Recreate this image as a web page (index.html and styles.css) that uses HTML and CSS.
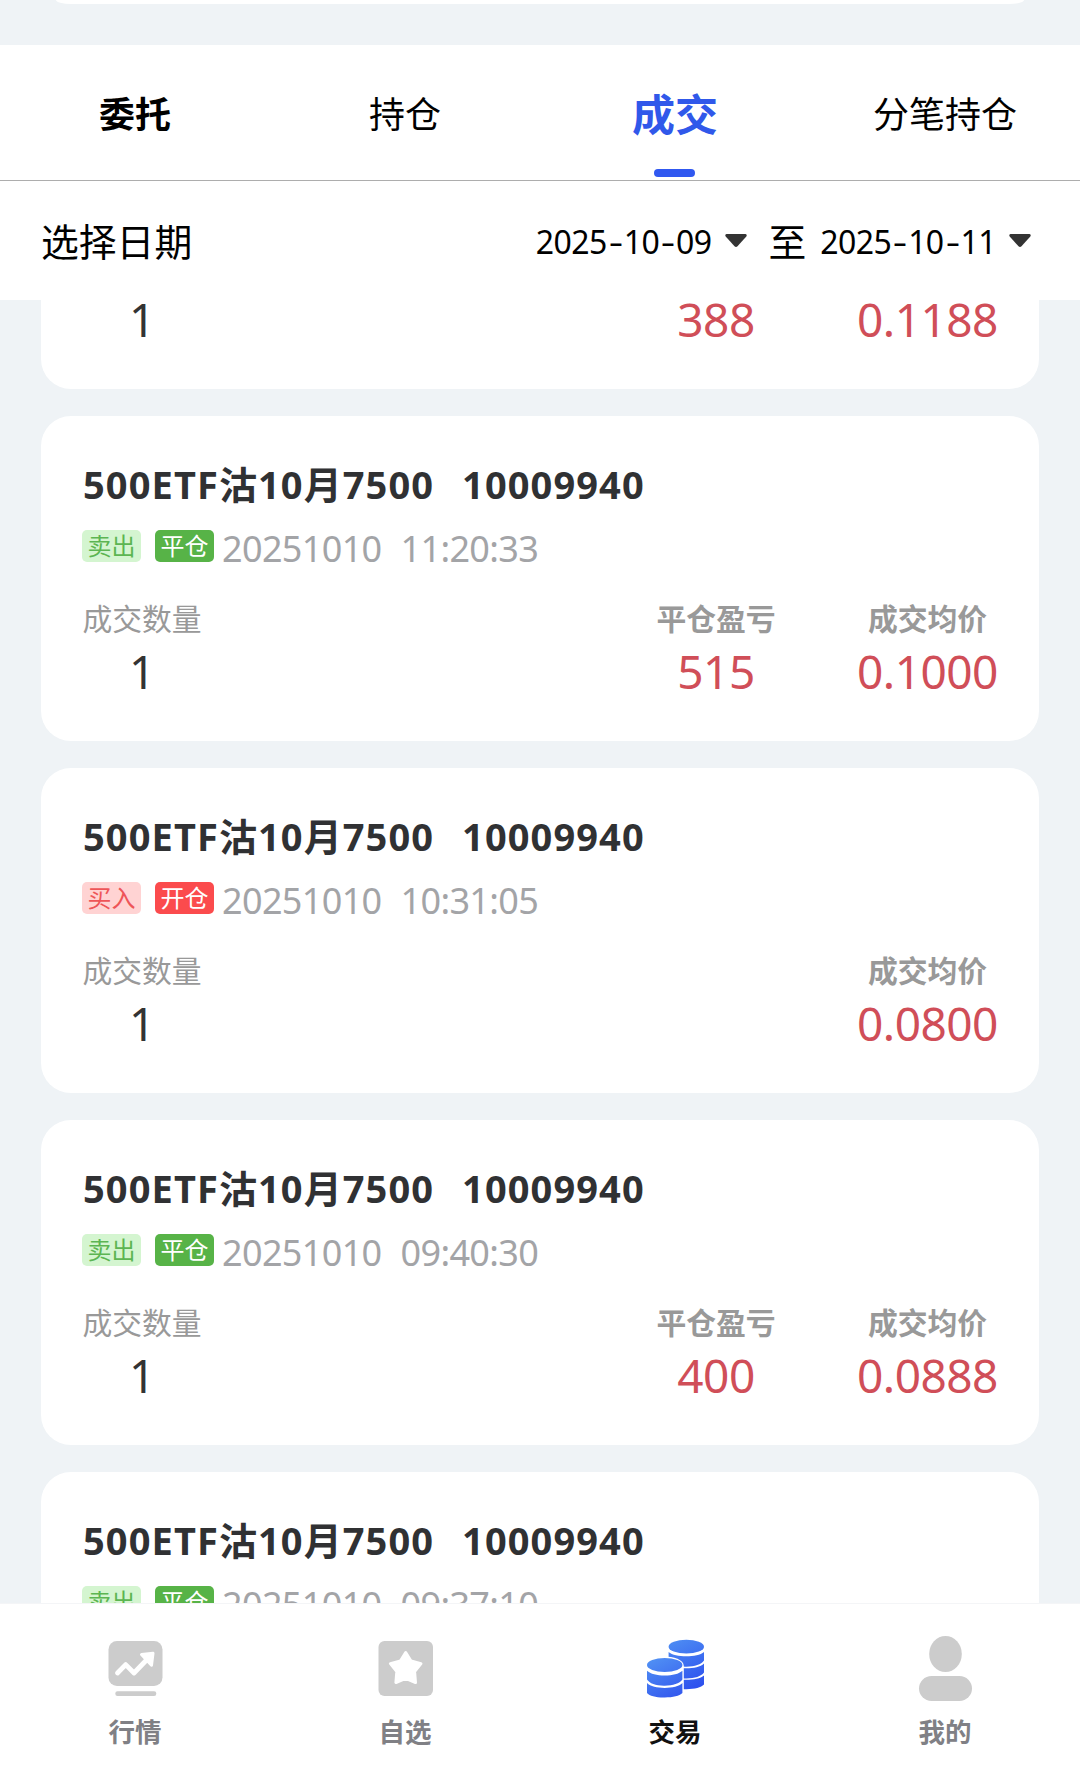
FILE: index.html
```
<!DOCTYPE html>
<html lang="zh-CN">
<head>
<meta charset="utf-8">
<title>成交</title>
<link rel="stylesheet" href="styles.css">
</head>
<body>
<div class="app">
  <div class="summary"></div>

  <nav class="tabs">
    <a class="tab tab-strong">委托</a>
    <a class="tab">持仓</a>
    <a class="tab tab-active">成交</a>
    <a class="tab">分笔持仓</a>
  </nav>

  <div class="filter">
    <span class="filter-label">选择日期</span>
    <div class="range">
      <span class="date">2025<i>-</i>10<i>-</i>09</span>
      <svg class="caret" viewBox="0 0 22 13"><path d="M1.5 0H20.500Q22.500 .8 21.300 2.500L12.500 12.200Q11 13.600 9.500 12.200L.7 2.500Q-.5 .8 1.500 0Z"/></svg>
      <span class="to">至</span>
      <span class="date">2025<i>-</i>10<i>-</i>11</span>
      <svg class="caret" viewBox="0 0 22 13"><path d="M1.5 0H20.500Q22.500 .8 21.300 2.500L12.500 12.200Q11 13.600 9.500 12.200L.7 2.500Q-.5 .8 1.500 0Z"/></svg>
    </div>
  </div>

  <main class="list">
    <article class="card card-tail">
      <div class="stats">
        <div class="stat qty"><b>1</b></div>
        <div class="stat pnl"><b>388</b></div>
        <div class="stat price"><b>0.1188</b></div>
      </div>
    </article>

    <article class="card">
      <h2 class="title"><span class="name">500ETF沽10月7500</span><span class="code">10009940</span></h2>
      <div class="meta"><span class="tag sell">卖出</span><span class="tag close">平仓</span><span class="day">20251010</span><span class="time">11:20:33</span></div>
      <div class="stats">
        <div class="stat qty"><span>成交数量</span><b>1</b></div>
        <div class="stat pnl"><span>平仓盈亏</span><b>515</b></div>
        <div class="stat price"><span>成交均价</span><b>0.1000</b></div>
      </div>
    </article>

    <article class="card">
      <h2 class="title"><span class="name">500ETF沽10月7500</span><span class="code">10009940</span></h2>
      <div class="meta"><span class="tag buy">买入</span><span class="tag open">开仓</span><span class="day">20251010</span><span class="time">10:31:05</span></div>
      <div class="stats">
        <div class="stat qty"><span>成交数量</span><b>1</b></div>
        <div class="stat price"><span>成交均价</span><b>0.0800</b></div>
      </div>
    </article>

    <article class="card">
      <h2 class="title"><span class="name">500ETF沽10月7500</span><span class="code">10009940</span></h2>
      <div class="meta"><span class="tag sell">卖出</span><span class="tag close">平仓</span><span class="day">20251010</span><span class="time">09:40:30</span></div>
      <div class="stats">
        <div class="stat qty"><span>成交数量</span><b>1</b></div>
        <div class="stat pnl"><span>平仓盈亏</span><b>400</b></div>
        <div class="stat price"><span>成交均价</span><b>0.0888</b></div>
      </div>
    </article>

    <article class="card">
      <h2 class="title"><span class="name">500ETF沽10月7500</span><span class="code">10009940</span></h2>
      <div class="meta"><span class="tag sell">卖出</span><span class="tag close">平仓</span><span class="day">20251010</span><span class="time">09:37:10</span></div>
    </article>
  </main>

  <footer class="nav">
    <a class="nav-item">
      <svg viewBox="0 0 60 66"><rect x="3.500" y="5" width="54" height="45" rx="8.500"/><rect x="10.300" y="55.300" width="41" height="4.700" rx="2.200"/><path class="line" d="M12.500 37L20.700 28.600L29 37L42 23.500"/><path class="cut" d="M36.500 18.500L48 17.300L46.500 29.300Z"/></svg>
      <span>行情</span>
    </a>
    <a class="nav-item">
      <svg viewBox="0 0 60 66"><rect x="3.500" y="5" width="54.500" height="55" rx="6"/><path class="cut" d="M30.700 16.500L36 25L46 27.600L39.600 35.500L40.500 46.500L30.700 42.300L20.900 46.500L21.800 35.500L15.400 27.600L25.400 25Z"/></svg>
      <span>自选</span>
    </a>
    <a class="nav-item nav-active">
      <svg viewBox="0 0 60 66">
        <defs>
          <linearGradient id="back" gradientUnits="userSpaceOnUse" x1="28" y1="4" x2="52" y2="52"><stop offset="0" stop-color="#4d8cf3"/><stop offset="1" stop-color="#2d50ee"/></linearGradient>
          <linearGradient id="front" gradientUnits="userSpaceOnUse" x1="8" y1="22" x2="28" y2="61"><stop offset="0" stop-color="#5090f4"/><stop offset="1" stop-color="#355bee"/></linearGradient>
        </defs>
        <g fill="url(#back)">
          <ellipse cx="41.300" cy="10.700" rx="17.700" ry="6.900"/>
          <path d="M23.600 16C27 19 34 20.300 41.300 20.300S55.600 19 59 16V24.500C56 28.500 50 30.500 41.300 30.700S26 28 23.600 24.500Z"/>
          <path d="M23.600 27.500C27 30.800 34 32.300 41.300 32.300S55.600 30.800 59 27.500V36.500C56 40.500 50 42.300 41.300 42.500S26 40 23.600 36.500Z"/>
          <path d="M23.600 39.500C27 42.600 34 43.800 41.300 43.800S55.600 42.600 59 39.500V48.500C56 51.500 50 53 41.300 53.200S26 52 23.600 48.500Z"/>
        </g>
        <path fill="#fff" d="M0 28.800C0 17.500 38.800 17.500 38.800 30V63H0Z"/>
        <g fill="url(#front)">
          <ellipse cx="19.700" cy="29" rx="17.700" ry="7"/>
          <path d="M2 34.800C5.400 38 12 39.500 19.700 39.500S34 38 37.400 34.800V43.500C34.500 47.500 28 49.500 19.700 49.700S4.500 47.500 2 43.500Z"/>
          <path d="M2 47C5.400 50.300 12 51.900 19.700 51.900S34 50.300 37.400 47V57C34.500 60 28 61.300 19.700 61.500S4.500 60 2 57Z"/>
        </g>
      </svg>
      <span>交易</span>
    </a>
    <a class="nav-item">
      <svg viewBox="0 0 60 66"><ellipse cx="30.500" cy="18" rx="16.300" ry="18"/><rect x="4" y="40" width="53" height="25" rx="12.500"/></svg>
      <span>我的</span>
    </a>
  </footer>
</div>
</body>
</html>
```
FILE: styles.css
```
* { box-sizing: border-box; }

body {
  margin: 0;
  background: #eff3f6;
  color: #000;
  font-family: "Noto Sans", "Noto Sans CJK SC", sans-serif;
}

.app {
  display: flex;
  flex-direction: column;
  height: 1765px;
  overflow: hidden;
}

.summary {
  flex: none;
  height: 4px;
  margin: 0 56px 41px;
  background: #fff;
  border-radius: 0 0 15px 15px / 0 0 4px 4px;
}

/* Section tabs */
.tabs {
  flex: none;
  display: grid;
  grid-template-columns: repeat(4, 1fr);
  height: 136px;
  background: #fff;
  border-bottom: 1px solid #adadad;
}

.tab {
  display: flex;
  align-items: center;
  justify-content: center;
  padding-bottom: 2px;
  font: 400 36px/52px "Noto Sans CJK SC", sans-serif;
}

.tab-strong { font-weight: 700; }

.tab-active {
  position: relative;
  color: #3058ea;
  font-size: 43px;
  font-weight: 700;
}

.tab-active::after {
  content: "";
  position: absolute;
  bottom: 3px;
  left: calc(50% - 21px);
  width: 41px;
  height: 8px;
  border-radius: 4px;
  background: #3058f0;
}

/* Date range */
.filter {
  flex: none;
  display: flex;
  align-items: center;
  justify-content: space-between;
  height: 119px;
  padding: 0 49px 0 41px;
  background: #fff;
}

.filter-label, .to {
  padding-bottom: 1px;
  font: 400 37.800px/54px "Noto Sans CJK SC", sans-serif;
}

.range { display: flex; align-items: center; }

.date {
  padding-top: 3px;
  font-size: 32px;
  line-height: 44px;
  letter-spacing: -0.600px;
  white-space: nowrap;
}

.date i {
  display: inline-block;
  width: 17px;
  font-style: normal;
  text-align: center;
  transform: scaleX(1.400);
}

.caret { width: 22px; height: 13px; margin-left: 13px; fill: #333; }
.to { margin: 0 14px 0 22px; }

/* Trades */
.list {
  flex: 1;
  min-height: 0;
  display: flex;
  flex-direction: column;
  gap: 27px;
  padding: 0 41px;
  overflow: hidden;
}

.card {
  flex: none;
  height: 325px;
  padding: 42px 41px 0;
  background: #fff;
  border-radius: 30px;
}

.card-tail {
  height: 89px;
  padding-top: 0;
  border-radius: 0 0 30px 30px;
}

.title {
  display: flex;
  gap: 28px;
  margin: 0;
  padding-left: 1px;
  color: #303133;
  font-size: 38px;
  font-weight: 700;
  line-height: 52px;
  letter-spacing: 1.100px;
  white-space: nowrap;
}

.meta {
  display: flex;
  align-items: center;
  height: 40px;
  margin-top: 18px;
  color: #a3a4a7;
  font-size: 36px;
  line-height: 40px;
  letter-spacing: -0.650px;
}

.day, .time { padding-top: 1px; }

.tag {
  width: 59px;
  height: 32px;
  margin: -4px 14px 0 0;
  border-radius: 5px;
  font: 400 24px/30px "Noto Sans CJK SC", sans-serif;
  letter-spacing: 0;
  text-align: center;
}

.tag + .tag { margin-right: 8px; }

.sell { background: #d4f5d0; color: #5cb552; }
.close { background: #57b347; color: #fff; }
.buy { background: #ffd3d3; color: #ee5558; }
.open { background: #fb4b4d; color: #fff; }

.time { margin-left: 19px; }

.stats {
  display: flex;
  gap: 81px;
  margin-top: 29px;
}

.card-tail .stats { margin-top: -1px; }

.stat { width: 120px; text-align: center; }
.qty { margin-right: auto; }
.price { width: 141px; }

.stat span {
  display: block;
  margin-bottom: 4px;
  color: #999;
  font: 700 29.800px/40px "Noto Sans CJK SC", sans-serif;
}

.qty span { font-weight: 400; }

.stat b {
  display: block;
  color: #d04e58;
  font-size: 46px;
  font-weight: 400;
  line-height: 60px;
  letter-spacing: -0.500px;
}

.qty b { color: #333; }
.card-tail b { line-height: 40px; }

/* Bottom navigation */
.nav {
  flex: none;
  display: grid;
  grid-template-columns: repeat(4, 1fr);
  height: 162px;
  background: #fff;
  border-top: 1px solid #f4f5f7;
}

.nav-item {
  display: flex;
  flex-direction: column;
  align-items: center;
  padding-top: 32px;
  color: #808085;
  font: 700 26.500px/32px "Noto Sans CJK SC", sans-serif;
}

.nav-item svg { width: 60px; height: 66px; margin-bottom: 13px; fill: #ccc; }
.nav-active { color: #111; }

.cut { fill: #fff; stroke: #fff; stroke-width: 3; stroke-linejoin: round; }
.line { fill: none; stroke: #fff; stroke-width: 4.800; stroke-linecap: round; stroke-linejoin: round; }
```
